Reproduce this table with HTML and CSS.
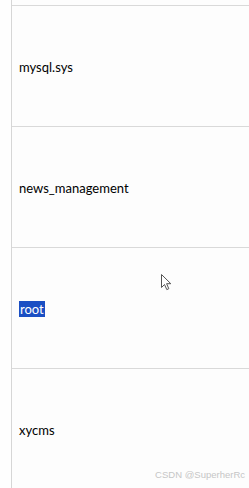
FILE: index.html
```html
<!DOCTYPE html>
<html>
<head>
<meta charset="utf-8">
<link rel="stylesheet" href="styles.css">
</head>
<body>
<div class="page">
  <div class="gutter"></div>
  <div class="table">
    <div class="stub"></div>
    <div class="row"><span class="cell">mysql.sys</span></div>
    <div class="row"><span class="cell">news_management</span></div>
    <div class="row"><span class="cell sel">root</span></div>
    <div class="row"><span class="cell">xycms</span></div>
  </div>
  <svg class="cursor" width="12" height="18" viewBox="0 0 12 18">
    <path d="M0.5 0.5 L0.5 13.5 L3.5 10.5 L5.8 15.6 L7.8 14.7 L5.6 9.7 L9.8 9.7 Z" fill="#fff" stroke="#555" stroke-width="1" stroke-linejoin="round"/>
  </svg>
  <div class="watermark">CSDN @SuperherRc</div>
</div>
</body>
</html>
```
FILE: styles.css
```css
html, body {
  margin: 0;
  padding: 0;
  background: #fdfdfd;
}
.page {
  position: relative;
  display: flex;
  width: 249px;
  height: 488px;
  overflow: hidden;
  font-family: "Lato", "Open Sans", sans-serif;
}
.gutter {
  width: 11px;
  flex: none;
  border-right: 1px solid #d6d6d6;
  background: #fefefe;
}
.table {
  flex: 1;
  display: flex;
  flex-direction: column;
}
.stub {
  height: 5px;
  flex: none;
  border-bottom: 1px solid #d9d9d9;
}
.row {
  height: 120px;
  flex: none;
  border-bottom: 1px solid #d9d9d9;
  display: flex;
  align-items: center;
  padding-left: 7px;
}
.cell {
  font-size: 13px;
  color: #000;
  line-height: 16px;
  padding-top: 2px;
}
.cell.sel {
  background: #1b4fc3;
  color: #fff;
  padding: 0 1px;
  margin-top: 1px;
}
.cursor {
  position: absolute;
  left: 161px;
  top: 274px;
}
.watermark {
  position: absolute;
  right: 4px;
  bottom: 8px;
  font-family: "Liberation Sans", Arial, sans-serif;
  font-size: 9.5px;
  color: #c6c6c6;
}
```
